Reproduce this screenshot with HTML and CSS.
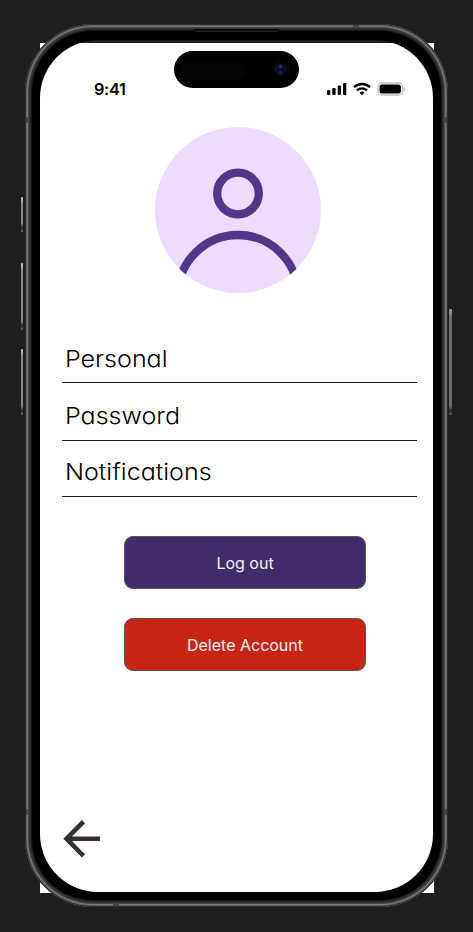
FILE: index.html
```html
<!DOCTYPE html>
<html lang="en">
<head>
<meta charset="utf-8">
<title>Account</title>
<link rel="stylesheet" href="styles.css">
</head>
<body>
<div class="phone">
  <i class="key key-action"></i><i class="key key-up"></i><i class="key key-down"></i><i class="key key-power"></i>
  <i class="speaker"></i>
  <i class="band band-top"></i><i class="band band-bottom"></i>
  <i class="band band-lt"></i><i class="band band-rt"></i><i class="band band-lb"></i><i class="band band-rb"></i>
  <main class="screen">
    <div class="island"><span class="sensor"></span><span class="camera"></span></div>
    <header class="status">
      <span class="time">9:41</span>
      <svg class="indicators" width="80" height="14" viewBox="0 0 80 14">
        <rect x="1" y="8" width="3.3" height="5" rx="1"/>
        <rect x="6.3" y="6" width="3.3" height="7" rx="1"/>
        <rect x="11.7" y="3.5" width="3.3" height="9.5" rx="1"/>
        <rect x="17" y="1" width="3.3" height="12" rx="1"/>
        <g fill="none" stroke="#000" stroke-width="2.3">
          <path d="M28 5.2a11.6 11.6 0 0 1 16 0"/>
          <path d="M31 8.3a7.2 7.2 0 0 1 10 0"/>
        </g>
        <path d="M33.5 10.7a3.7 3.7 0 0 1 5 0L36 13.2Z"/>
        <rect x="52" y="1" width="24.6" height="12" rx="3.8" fill="#fff" stroke="#c2c2c2" stroke-width="1.3"/>
        <rect x="53.5" y="2.5" width="21.4" height="9" rx="2.5"/>
        <path d="M77.7 5v4.4q1.5-.7 1.5-2.2t-1.5-2.2Z" fill="#b5b5b5"/>
      </svg>
    </header>
    <svg class="avatar" width="166" height="166" viewBox="0 0 166 166">
      <defs><clipPath id="disc"><circle cx="83" cy="83" r="83"/></clipPath></defs>
      <circle cx="83" cy="83" r="83" fill="#eaddff"/>
      <g fill="none" stroke="#4f378a" stroke-width="8.3" clip-path="url(#disc)">
        <circle cx="83" cy="66.5" r="20.8"/>
        <circle cx="83" cy="168" r="60"/>
      </g>
    </svg>
    <nav class="menu">
      <a class="row"><span class="label">Personal</span></a>
      <a class="row"><span class="label">Password</span></a>
      <a class="row row-last"><span class="label">Notifications</span></a>
    </nav>
    <div class="actions">
      <button class="btn logout">Log out</button>
      <button class="btn delete">Delete Account</button>
    </div>
    <svg class="back" width="38" height="38" viewBox="0 0 38 38" fill="none" stroke="#362f2f" stroke-width="4.6">
      <path d="M37 18.7H4M20.5 1.6 3.5 18.7 20.5 36"/>
    </svg>
  </main>
</div>
</body>
</html>
```
FILE: styles.css
```css
* { box-sizing: border-box; }
html { background: #1e1e1e; }
body {
  isolation: isolate;
  margin: 0;
  height: 932px;
  padding: 24px 0 0 25px;
  overflow: hidden;
  font-family: Inter, "Noto Sans", sans-serif;
}
.phone {
  position: relative;
  width: 423px;
  height: 883px;
  padding: 16px 15px 15px;
  border-radius: 68px;
  background: #000;
  box-shadow:
    inset 0 0 0 1px #2c2c2c,
    inset 0 0 0 2px #5e5e5e,
    inset 0 0 0 3px #7a7a7a,
    inset 0 0 0 4px #444,
    inset 0 0 0 5px #353535,
    inset 0 0 0 6px #292929,
    inset 0 0 0 7px #151515;
}
.phone::before {
  content: "";
  position: absolute;
  z-index: -1;
  left: 15px;
  top: 19px;
  width: 394px;
  height: 850px;
  background: #fff;
}
.screen {
  position: relative;
  display: flex;
  flex-direction: column;
  width: 393px;
  height: 852px;
  border-radius: 58px;
  background: linear-gradient(#1c1c1c 3px, #fff 3px);
  overflow: hidden;
}
.island {
  position: absolute;
  left: 134px;
  top: 11px;
  width: 125px;
  height: 37px;
  border-radius: 19px;
  background: #000;
}
.sensor {
  position: absolute;
  left: 7px;
  top: 8px;
  width: 65px;
  height: 22px;
  border-radius: 11px;
  background: #040404;
}
.camera {
  position: absolute;
  left: 100px;
  top: 12px;
  width: 13px;
  height: 13px;
  border-radius: 50%;
  background: radial-gradient(circle at 50% 28%, #34346f 0 1px, transparent 2px), radial-gradient(circle at 50% 72%, #20205c 0 1px, transparent 2px), radial-gradient(circle, #080830 0 3px, #11112a 5px, #080810 6px);
  box-shadow: 0 0 0 3px #060306;
}
.status {
  display: flex;
  justify-content: space-between;
  align-items: center;
  height: 20px;
  margin: 39px 27px 0 54px;
}
.time {
  font-size: 16.3px;
  font-weight: 600;
  letter-spacing: -.3px;
}
.avatar {
  flex: none;
  margin: 28px 0 0 115px;
}
.menu {
  display: flex;
  flex-direction: column;
  margin: 33px 16px 0 22px;
}
.row {
  height: 58px;
  padding: 17px 0 0 3px;
  border-bottom: 1px solid #1d1b20;
  font-size: 23.3px;
  line-height: 32px;
  font-weight: 270;
  font-feature-settings: "cv11" 1;
  color: #000;
}
.row:first-child { height: 57px; }
.row-last { height: 56px; padding-top: 15px; }
.label {
  display: inline-block;
  transform: scaleX(1.075);
  transform-origin: 0 50%;
}
.actions {
  display: flex;
  flex-direction: column;
  gap: 29px;
  margin: 39px 67px 0 84px;
}
.btn {
  height: 53px;
  padding: 0;
  border: 1px solid #555;
  border-radius: 9px;
  color: #f5f5f5;
  font: 400 16px/16px Inter, sans-serif;
}
.logout { background: #3e2d68; }
.delete { background: #c72414; }
.back { margin: auto 0 34px 23px; flex: none; }
.key {
  position: absolute;
  left: -4px;
  width: 2px;
  border-radius: 1px;
  background: linear-gradient(#ccc, #888 8px, #888 calc(100% - 9px), #222 calc(100% - 4px), #777);
}
.key-action { top: 173px; height: 35px; }
.key-up { top: 239px; height: 67px; }
.key-down { top: 325px; height: 66px; }
.key-power { left: 424px; width: 3px; top: 285px; height: 106px; opacity: .75; }
.speaker {
  position: absolute;
  left: 169px;
  top: 5px;
  width: 85px;
  height: 3px;
  border-radius: 0 0 3px 3px;
  background: #080808;
  border-bottom: 1px solid #252525;
}
.band { position: absolute; background: #44474a; }
.band-top, .band-bottom { width: 6px; height: 3px; }
.band-top { left: 328px; top: 1px; }
.band-bottom { left: 88px; bottom: 1px; }
.band-lt, .band-rt, .band-lb, .band-rb { width: 3px; height: 6px; }
.band-lt, .band-lb { left: 1px; }
.band-rt, .band-rb { right: 1px; }
.band-lt, .band-rt { top: 93px; }
.band-lb, .band-rb { top: 785px; }
```
